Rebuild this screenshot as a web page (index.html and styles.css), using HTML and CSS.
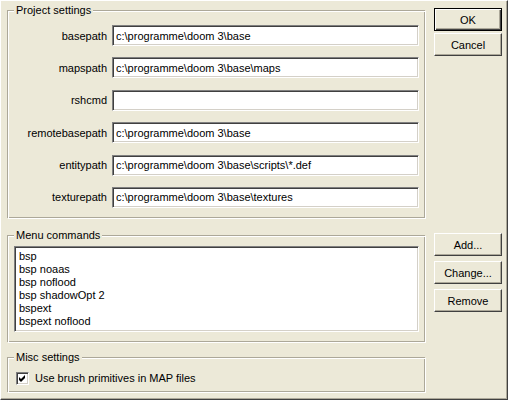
FILE: index.html
```html
<!DOCTYPE html>
<html lang="en">
<head>
    <meta charset="UTF-8">
    <meta name="viewport" content="width=device-width, initial-scale=1.0">
    <title>Project settings</title>
    <link rel="stylesheet" href="styles.css">
</head>
<body>
    <div class="dialog">
        <div class="col-main">
            <div class="group group-project">
                <span class="group-title">Project settings</span>
                <div class="fields">
                    <label class="field-label">basepath</label>
                    <input type="text" class="edit" value="c:\programme\doom 3\base">
                    <label class="field-label">mapspath</label>
                    <input type="text" class="edit" value="c:\programme\doom 3\base\maps">
                    <label class="field-label">rshcmd</label>
                    <input type="text" class="edit" value="">
                    <label class="field-label">remotebasepath</label>
                    <input type="text" class="edit" value="c:\programme\doom 3\base">
                    <label class="field-label">entitypath</label>
                    <input type="text" class="edit" value="c:\programme\doom 3\base\scripts\*.def">
                    <label class="field-label">texturepath</label>
                    <input type="text" class="edit" value="c:\programme\doom 3\base\textures">
                </div>
            </div>

            <div class="group group-menu">
                <span class="group-title">Menu commands</span>
                <ul class="listbox">
                    <li>bsp</li>
                    <li>bsp noaas</li>
                    <li>bsp noflood</li>
                    <li>bsp shadowOpt 2</li>
                    <li>bspext</li>
                    <li>bspext noflood</li>
                </ul>
            </div>

            <div class="group group-misc">
                <span class="group-title">Misc settings</span>
                <label class="check-row">
                    <span class="checkbox">
                        <svg width="9" height="9" viewBox="0 0 9 9">
                            <polygon points="1,3 3,5 7,1 7,4 3,8 1,6" fill="#000"/>
                        </svg>
                    </span>
                    Use brush primitives in MAP files
                </label>
            </div>
        </div>

        <div class="col-buttons">
            <div class="btn-stack">
                <button class="btn btn-default">OK</button>
                <button class="btn">Cancel</button>
            </div>
            <div class="btn-stack btn-stack-list">
                <button class="btn">Add...</button>
                <button class="btn">Change...</button>
                <button class="btn">Remove</button>
            </div>
        </div>
    </div>
</body>
</html>
```

FILE: styles.css
```css
body {
    margin: 0;
    background: #ece9d8;
    font-family: 'Liberation Sans', Arial, sans-serif;
    font-size: 11px;
    color: #000;
}

.dialog {
    width: 508px;
    height: 400px;
    box-sizing: border-box;
    display: flex;
    gap: 9px;
    padding: 7px 5px 0 6px;
    background: #ece9d8;
    border: 1px solid;
    border-color: #ffffff #404040 #404040 #ffffff;
    box-shadow: inset -1px -1px #aca899;
}

.col-main {
    width: 418px;
    display: flex;
    flex-direction: column;
}

/* etched group box: grey line, white line offset by one pixel */
.group {
    position: relative;
    border: 1px solid #aca899;
}

.group::after {
    content: "";
    position: absolute;
    top: 0;
    left: 0;
    right: -2px;
    bottom: -2px;
    border: 1px solid #ffffff;
    pointer-events: none;
}

.group-title {
    position: absolute;
    top: -7px;
    left: 6px;
    z-index: 1;
    padding: 0 2px;
    line-height: 13px;
    background: #ece9d8;
}

.group-project {
    margin-top: 2px;
    padding: 14px 5px 9px 5px;
}

.group-menu {
    margin-top: 17px;
    padding: 10px 5px 9px 6px;
}

.group-misc {
    margin-top: 15px;
    padding: 14px 8px 6px 8px;
}

.fields {
    display: grid;
    grid-template-columns: 94px 1fr;
    column-gap: 5px;
    row-gap: 11.4px;
    align-items: center;
}

.field-label {
    text-align: right;
    white-space: nowrap;
}

/* sunken edit control */
.edit,
.listbox,
.checkbox {
    border: 1px solid;
    border-color: #808080 #ffffff #ffffff #808080;
    box-shadow: inset 1px 1px #404040, inset -1px -1px #d4d0c8;
    background: #ffffff;
}

.edit {
    box-sizing: border-box;
    height: 21px;
    width: 100%;
    margin: 0;
    padding: 0 2px 0 3px;
    font-family: inherit;
    font-size: 11px;
    color: #000;
    outline: none;
}

.listbox {
    box-sizing: border-box;
    height: 86px;
    margin: 0;
    padding: 3px 3px;
    list-style: none;
}

.listbox li {
    line-height: 13px;
    padding-left: 1px;
}

.check-row {
    display: flex;
    align-items: center;
    gap: 6px;
    height: 13px;
}

.checkbox {
    box-sizing: border-box;
    width: 13px;
    height: 13px;
    padding: 1px;
    display: flex;
}

.checkbox svg {
    display: block;
}

.col-buttons {
    width: 68px;
    display: flex;
    flex-direction: column;
}

.btn-stack {
    display: flex;
    flex-direction: column;
    gap: 2px;
}

.btn-stack-list {
    margin-top: 177px;
    gap: 5px;
}

/* raised push button */
.btn {
    box-sizing: border-box;
    width: 68px;
    height: 23px;
    margin: 0;
    padding: 0;
    font-family: inherit;
    font-size: 11px;
    color: #000;
    background: #ece9d8;
    border: 1px solid;
    border-color: #ffffff #404040 #404040 #ffffff;
    box-shadow: inset -1px -1px #aca899;
}

.btn-default {
    border: 1px solid #000;
    box-shadow: inset 1px 1px #ffffff, inset -1px -1px #404040, inset -2px -2px #aca899;
}
```
